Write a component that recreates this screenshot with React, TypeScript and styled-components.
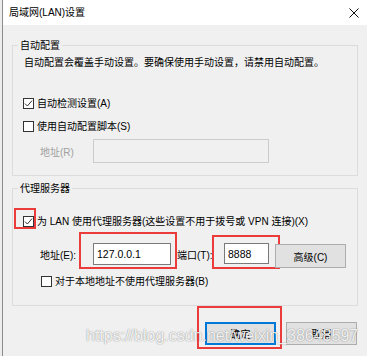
import React from "react";
import styled, { createGlobalStyle, css } from "styled-components";

const Global = createGlobalStyle`
  html, body { margin: 0; padding: 0; background: #ececec; }
  body { font-family: "Liberation Sans", "Noto Sans CJK SC", sans-serif; font-size: 10px; color: #000; }
`;

const Window = styled.div`
  position: relative;
  margin-left: 2px;
  width: 364px;
  height: 356px;
  border-left: 1px solid #8c8c8c;
  background: #f0f0f0;
  display: flex;
  flex-direction: column;
  overflow: hidden;
`;

const TitleBar = styled.div`
  height: 25px;
  background: #ffffff;
  display: flex;
  align-items: center;
  justify-content: space-between;
  padding: 0 8px 0 6px;
  flex-shrink: 0;
`;

const Title = styled.span`
  font-size: 10px;
  line-height: 12px;
`;

const Body = styled.div`
  display: flex;
  flex-direction: column;
  padding: 0 9px;
`;

const Group = styled.fieldset<{ $top: number }>`
  margin: ${(p) => p.$top}px 0 0 0;
  padding: 0;
  border: 1px solid #dcdcdc;
  min-width: 0;
`;

const Legend = styled.legend`
  margin-left: 5px;
  padding: 0 2px;
  font-size: 10px;
  line-height: 13px;
  color: #000;
`;

const GroupContent = styled.div<{ $pt: number; $pb: number }>`
  display: flex;
  flex-direction: column;
  padding: ${(p) => p.$pt}px 0 ${(p) => p.$pb}px 10px;
`;

const Desc = styled.div`
  margin-left: 1px;
  line-height: 12px;
`;

const CheckRow = styled.label<{ $mt: number; $ml?: number }>`
  display: flex;
  align-items: center;
  gap: 3px;
  height: 13px;
  margin-top: ${(p) => p.$mt}px;
  margin-left: ${(p) => p.$ml ?? 0}px;
  line-height: 13px;
`;

const Box = styled.span`
  position: relative;
  width: 11px;
  height: 11px;
  box-sizing: border-box;
  border: 1px solid #333333;
  background: #ffffff;
  display: inline-flex;
  align-items: center;
  justify-content: center;
  flex-shrink: 0;
`;

const Annot = styled.span<{ $l: number; $t: number; $r: number; $b: number }>`
  position: absolute;
  left: ${(p) => p.$l}px;
  top: ${(p) => p.$t}px;
  right: ${(p) => p.$r}px;
  bottom: ${(p) => p.$b}px;
  border: 2px solid #ec3b3b;
  pointer-events: none;
`;

const FieldRow = styled.div<{ $mt: number }>`
  display: flex;
  align-items: flex-start;
  margin-top: ${(p) => p.$mt}px;
`;

const FieldLabel = styled.span<{ $w: number; $ml?: number; $h: number; $disabled?: boolean }>`
  width: ${(p) => p.$w}px;
  margin-left: ${(p) => p.$ml ?? 0}px;
  height: ${(p) => p.$h}px;
  display: flex;
  align-items: center;
  color: ${(p) => (p.$disabled ? "#a0a0a0" : "#000")};
  flex-shrink: 0;
`;

const InputWrap = styled.span`
  position: relative;
  display: inline-flex;
  flex-shrink: 0;
`;

const Input = styled.div<{ $w: number; $h: number; $disabled?: boolean }>`
  width: ${(p) => p.$w}px;
  height: ${(p) => p.$h}px;
  box-sizing: border-box;
  border: 1px solid ${(p) => (p.$disabled ? "#cccccc" : "#7a7a7a")};
  background: ${(p) => (p.$disabled ? "#f0f0f0" : "#ffffff")};
  padding-left: 3px;
  display: flex;
  align-items: center;
  font-size: 10.5px;
`;

const Button = styled.button<{ $primary?: boolean; $ml?: number; $mt?: number }>`
  position: relative;
  width: 71px;
  height: ${(p) => (p.$primary !== undefined ? 23 : 24)}px;
  margin-left: ${(p) => p.$ml ?? 0}px;
  margin-top: ${(p) => p.$mt ?? 0}px;
  box-sizing: border-box;
  background: #e1e1e1;
  border: 1px solid #adadad;
  font-family: "Liberation Sans", "Noto Sans CJK SC", sans-serif;
  font-size: 10px;
  color: #000;
  padding: 0;
  flex-shrink: 0;
  ${(p) =>
    p.$primary &&
    css`
      border: 1px solid #0078d7;
      box-shadow: inset 0 0 0 1px #0078d7;
    `}
`;

const Buttons = styled.div`
  display: flex;
  justify-content: flex-end;
  margin-top: 16px;
  padding-right: 1px;
  gap: 10px;
`;

const Watermark = styled.div`
  position: absolute;
  left: 83px;
  top: 327px;
  font-family: "Liberation Sans", sans-serif;
  font-size: 16px;
  line-height: 18px;
  color: rgba(255, 255, 255, 0.9);
  text-shadow: 0 0 1px rgba(0, 0, 0, 0.35), 0 0 2px rgba(0, 0, 0, 0.2);
  white-space: nowrap;
  pointer-events: none;
`;

const Check = () => (
  <svg width="9" height="9" viewBox="0 0 9 9">
    <path d="M1 4.6 L3.4 7 L8 1.6" fill="none" stroke="#333" strokeWidth="1" />
  </svg>
);

const CloseIcon = () => (
  <svg width="10" height="10" viewBox="0 0 10 10">
    <path d="M0.5 0.5 L9.5 9.5 M9.5 0.5 L0.5 9.5" stroke="#111" strokeWidth="1" />
  </svg>
);

export default function App() {
  return (
    <>
      <Global />
      <Window>
        <TitleBar>
          <Title>局域网(LAN)设置</Title>
          <CloseIcon />
        </TitleBar>
        <Body>
          <Group $top={14}>
            <Legend>自动配置</Legend>
            <GroupContent $pt={5} $pb={12}>
              <Desc>自动配置会覆盖手动设置。要确保使用手动设置，请禁用自动配置。</Desc>
              <CheckRow $mt={28}>
                <Box>
                  <Check />
                </Box>
                自动检测设置(A)
              </CheckRow>
              <CheckRow $mt={10}>
                <Box />
                使用自动配置脚本(S)
              </CheckRow>
              <FieldRow $mt={6}>
                <FieldLabel $w={53} $ml={17} $h={24} $disabled>
                  地址(R)
                </FieldLabel>
                <Input $w={176} $h={24} $disabled />
              </FieldRow>
            </GroupContent>
          </Group>
          <Group $top={6}>
            <Legend>代理服务器</Legend>
            <GroupContent $pt={20} $pb={17}>
              <CheckRow $mt={0}>
                <Box>
                  <Check />
                  <Annot $l={-10} $t={-9} $r={-3} $b={-3} />
                </Box>
                为 LAN 使用代理服务器(这些设置不用于拨号或 VPN 连接)(X)
              </CheckRow>
              <FieldRow $mt={15}>
                <FieldLabel $w={53} $ml={17} $h={22}>
                  地址(E):
                </FieldLabel>
                <InputWrap>
                  <Input $w={78} $h={22}>127.0.0.1</Input>
                  <Annot $l={-14} $t={-11} $r={-6} $b={-4} />
                </InputWrap>
                <FieldLabel $w={47} $ml={6} $h={22}>
                  端口(T):
                </FieldLabel>
                <InputWrap>
                  <Input $w={45} $h={21}>8888</Input>
                  <Annot $l={-12} $t={-8} $r={-11} $b={-5} />
                </InputWrap>
                <Button $ml={6} $mt={1}>高级(C)</Button>
              </FieldRow>
              <CheckRow $mt={7} $ml={18}>
                <Box />
                对于本地地址不使用代理服务器(B)
              </CheckRow>
            </GroupContent>
          </Group>
          <Buttons>
            <Button $primary>
              确定
              <Annot $l={-9} $t={-17} $r={-7} $b={-5} />
            </Button>
            <Button $primary={false}>取消</Button>
          </Buttons>
        </Body>
        <Watermark>https://blog.csdn.net/weixin_38648597</Watermark>
      </Window>
    </>
  );
}
